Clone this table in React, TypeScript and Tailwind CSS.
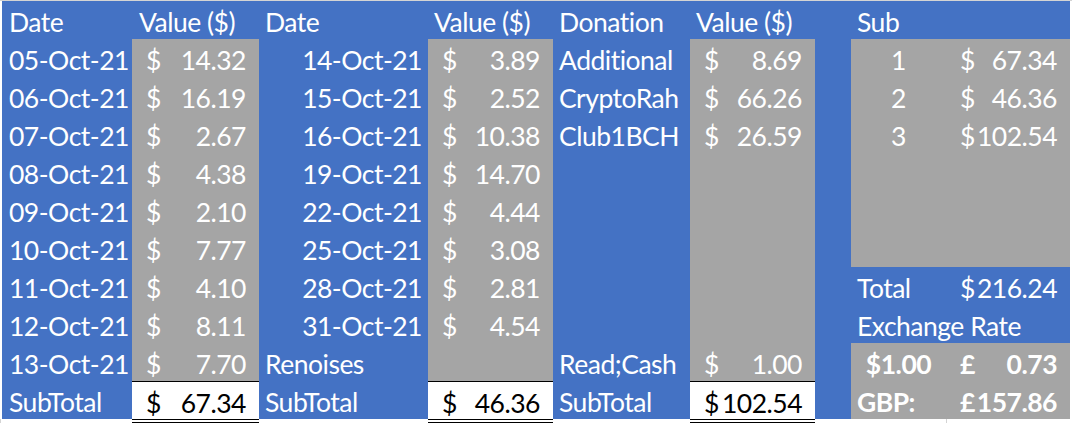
import type { ReactNode } from "react";

const blue = "bg-[#4472c4]";
const gray = "bg-[#a5a5a5]";

const week1 = [
  ["05-Oct-21", "14.32"],
  ["06-Oct-21", "16.19"],
  ["07-Oct-21", "2.67"],
  ["08-Oct-21", "4.38"],
  ["09-Oct-21", "2.10"],
  ["10-Oct-21", "7.77"],
  ["11-Oct-21", "4.10"],
  ["12-Oct-21", "8.11"],
  ["13-Oct-21", "7.70"],
];

const week2 = [
  ["14-Oct-21", "3.89"],
  ["15-Oct-21", "2.52"],
  ["16-Oct-21", "10.38"],
  ["19-Oct-21", "14.70"],
  ["22-Oct-21", "4.44"],
  ["25-Oct-21", "3.08"],
  ["28-Oct-21", "2.81"],
  ["31-Oct-21", "4.54"],
  ["Renoises", ""],
];

const donations = [
  ["Additional", "8.69"],
  ["CryptoRah", "66.26"],
  ["Club1BCH", "26.59"],
  ["", ""],
  ["", ""],
  ["", ""],
  ["", ""],
  ["", ""],
  ["Read;Cash", "1.00"],
];

function Cell({ className = "", children }: { className?: string; children?: ReactNode }) {
  return <div className={`h-[38px] overflow-visible whitespace-nowrap ${className}`}>{children}</div>;
}

function Money({ sym = "$", value, className = "" }: { sym?: string; value: string; className?: string }) {
  if (!value) return <Cell className={className} />;
  return (
    <Cell className={`flex justify-between pl-[14px] pr-[13px] ${className}`}>
      <span>{sym}</span>
      <span>{value}</span>
    </Cell>
  );
}

function SubTotal({ value }: { value: string }) {
  return <Money value={value} className="bg-white text-black border-t border-black" />;
}

export default function App() {
  const right: ReactNode[][] = [
    [<Cell key="h" className={`${blue} pl-[6px] col-span-2`}>Sub</Cell>],
    ...[
      ["1", "67.34"],
      ["2", "46.36"],
      ["3", "102.54"],
    ].map(([n, v]) => [
      <Cell key="h" className={`${gray} text-center`}>{n}</Cell>,
      <Money key="i" value={v} className={gray} />,
    ]),
    ...[0, 1, 2].map(() => [<Cell key="h" className={`${gray} col-span-2`} />]),
    [
      <Cell key="h" className={`${blue} pl-[6px]`}>Total</Cell>,
      <Money key="i" value="216.24" className={blue} />,
    ],
    [<Cell key="h" className={`${blue} pl-[6px] col-span-2`}>Exchange Rate</Cell>],
    [
      <Cell key="h" className={`${gray} text-center font-bold`}>$1.00</Cell>,
      <Money key="i" sym="£" value="0.73" className={`${gray} font-bold`} />,
    ],
    [
      <Cell key="h" className={`${gray} pl-[6px] font-bold`}>GBP:</Cell>,
      <Money key="i" sym="£" value="157.86" className={`${gray} font-bold`} />,
    ],
  ];

  return (
    <div className="w-[1072px] h-[423px] bg-white overflow-hidden border-t border-[#d4d4d4] [font-family:Lato,sans-serif] text-[26.5px] leading-[42px] tracking-[-0.5px] text-white">
      <div className={`ml-[2px] w-[1068px] ${blue} grid grid-cols-[130px_127px_169px_125px_137px_125px_36px_95px_124px]`}>
        {/* header row */}
        <Cell className={`${blue} pl-[7px]`}>Date</Cell>
        <Cell className={`${blue} pl-[7px]`}>Value ($)</Cell>
        <Cell className={`${blue} pl-[6px]`}>Date</Cell>
        <Cell className={`${blue} pl-[6px]`}>Value ($)</Cell>
        <Cell className={`${blue} pl-[6px]`}>Donation</Cell>
        <Cell className={`${blue} pl-[6px]`}>Value ($)</Cell>
        <Cell className={blue} />
        {right[0]}

        {week1.map(([d, v], i) => {
          const [d2, v2] = week2[i];
          const [n, v3] = donations[i];
          return [
            <Cell key={`a${i}`} className={`${blue} pl-[7px]`}>{d}</Cell>,
            <Money key={`b${i}`} value={v} className={gray} />,
            <Cell key={`c${i}`} className={`${blue} ${i === 8 ? "pl-[6px]" : "text-right pr-[6px]"}`}>{d2}</Cell>,
            <Money key={`d${i}`} value={v2} className={gray} />,
            <Cell key={`e${i}`} className={`${blue} pl-[6px]`}>{n}</Cell>,
            <Money key={`f${i}`} value={v3} className={gray} />,
            <Cell key={`g${i}`} className={blue} />,
            ...right[i + 1],
          ];
        })}

        {/* subtotal row */}
        <Cell className={`${blue} pl-[7px]`}>SubTotal</Cell>
        <SubTotal value="67.34" />
        <Cell className={`${blue} pl-[6px]`}>SubTotal</Cell>
        <SubTotal value="46.36" />
        <Cell className={`${blue} pl-[6px]`}>SubTotal</Cell>
        <SubTotal value="102.54" />
        <Cell className={blue} />
        {right[10]}
      </div>

      {/* below the table: double underlines and gridlines */}
      <div className="ml-[2px] w-[1068px] h-[4px] grid grid-cols-[130px_127px_169px_125px_137px_125px_36px_95px_124px]">
        <div className="border-l border-[#d4d4d4] -ml-[2px]" />
        <div className="border-t border-b border-black" />
        <div />
        <div className="border-t border-b border-black" />
        <div />
        <div className="border-t border-b border-black" />
        <div />
        <div />
        <div className="border-l border-[#d4d4d4]" />
      </div>
    </div>
  );
}
